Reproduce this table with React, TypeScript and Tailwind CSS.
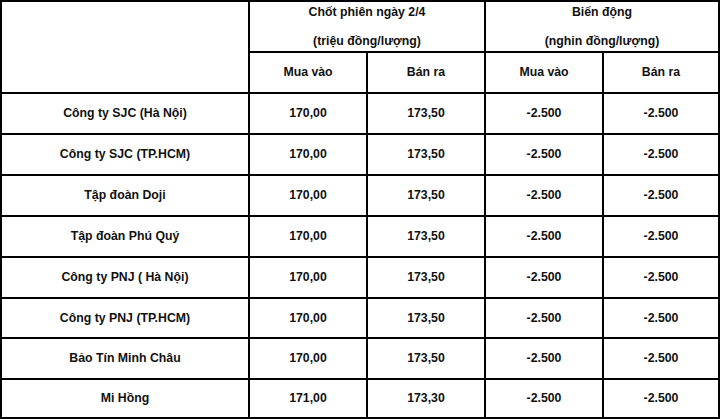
const rows = [
  { name: 'Công ty SJC (Hà Nội)', buy: '170,00', sell: '173,50', dBuy: '-2.500', dSell: '-2.500', h: 'h-[39px]' },
  { name: 'Công ty SJC (TP.HCM)', buy: '170,00', sell: '173,50', dBuy: '-2.500', dSell: '-2.500', h: 'h-[39px]' },
  { name: 'Tập đoàn Doji', buy: '170,00', sell: '173,50', dBuy: '-2.500', dSell: '-2.500', h: 'h-[39px]' },
  { name: 'Tập đoàn Phú Quý', buy: '170,00', sell: '173,50', dBuy: '-2.500', dSell: '-2.500', h: 'h-[39px]' },
  { name: 'Công ty PNJ ( Hà Nội)', buy: '170,00', sell: '173,50', dBuy: '-2.500', dSell: '-2.500', h: 'h-[39px]' },
  { name: 'Công ty PNJ (TP.HCM)', buy: '170,00', sell: '173,50', dBuy: '-2.500', dSell: '-2.500', h: 'h-[38px]' },
  { name: 'Bảo Tín Minh Châu', buy: '170,00', sell: '173,50', dBuy: '-2.500', dSell: '-2.500', h: 'h-[39px]' },
  { name: 'Mi Hồng', buy: '171,00', sell: '173,30', dBuy: '-2.500', dSell: '-2.500', h: 'h-[37px]' },
]

function Cell({ children, className = '' }: { children?: React.ReactNode; className?: string }) {
  return (
    <div className={`bg-white flex items-center justify-center text-center ${className}`}>
      {children}
    </div>
  )
}

export default function App() {
  return (
    <div
      className="w-[720px] h-[419px] bg-black p-[2px] grid grid-cols-[246px_116px_116px_116px_114px] gap-[2px] text-[12.3px] font-bold text-[#111]"
      style={{ fontFamily: '"Liberation Sans", Arial, sans-serif' }}
    >
      <Cell className="row-span-2" />
      <Cell className="col-span-2 h-[49px] flex-col gap-[11px]">
        <span>Chốt phiên ngày 2/4</span>
        <span>(triệu đồng/lượng)</span>
      </Cell>
      <Cell className="col-span-2 h-[49px] flex-col gap-[11px]">
        <span>Biến động</span>
        <span>(nghin đồng/lượng)</span>
      </Cell>
      <Cell className="h-[39px]">Mua vào</Cell>
      <Cell className="h-[39px]">Bán ra</Cell>
      <Cell className="h-[39px]">Mua vào</Cell>
      <Cell className="h-[39px]">Bán ra</Cell>

      {rows.map((r, i) => (
        <div key={i} className="contents">
          <Cell className={r.h}>{r.name}</Cell>
          <Cell className={r.h}>{r.buy}</Cell>
          <Cell className={r.h}>{r.sell}</Cell>
          <Cell className={r.h}>{r.dBuy}</Cell>
          <Cell className={r.h}>{r.dSell}</Cell>
        </div>
      ))}
    </div>
  )
}
